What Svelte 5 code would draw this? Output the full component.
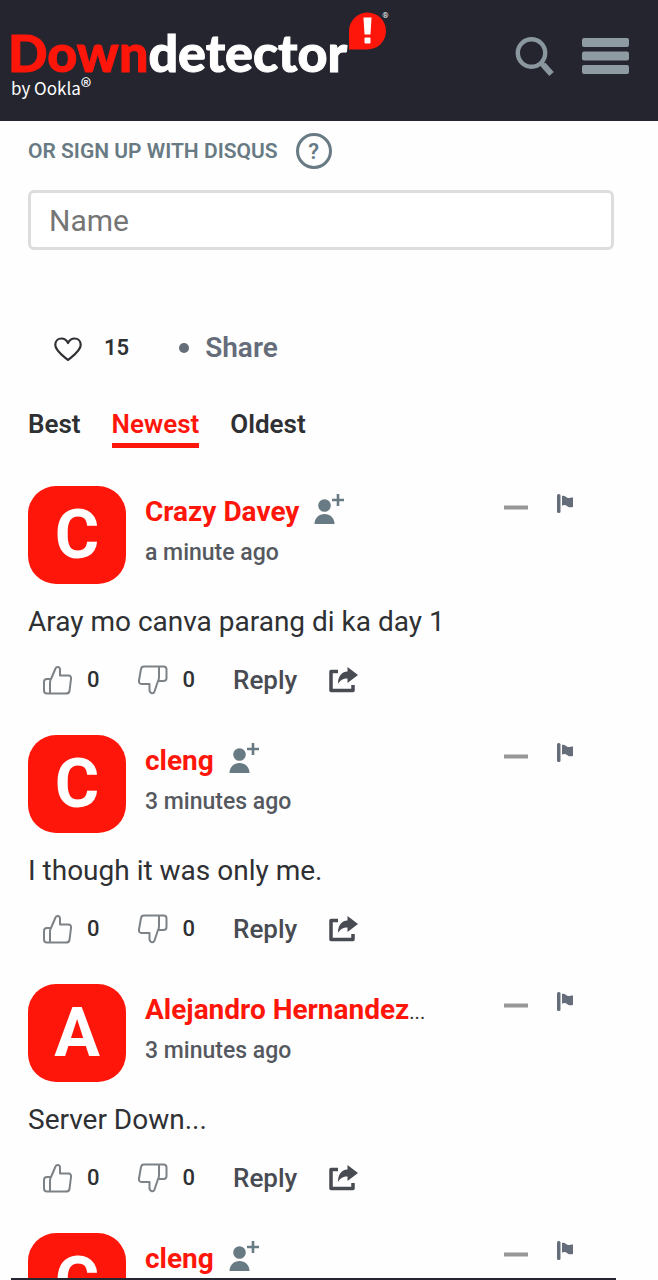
<script lang="ts">
	type Comment = {
		id: number;
		name: string;
		time?: string;
		text?: string;
		truncated?: boolean;
	};

	const sorts = ['Best', 'Newest', 'Oldest'];

	const comments: Comment[] = [
		{ id: 1, name: 'Crazy Davey', time: 'a minute ago', text: 'Aray mo canva parang di ka day 1' },
		{ id: 2, name: 'cleng', time: '3 minutes ago', text: 'I though it was only me.' },
		{ id: 3, name: 'Alejandro Hernandez', time: '3 minutes ago', text: 'Server Down...', truncated: true },
		{ id: 4, name: 'cleng' }
	];

	let activeSort = 'Newest';
	let guestName = '';
</script>

<div class="page">
	<header class="topbar">
		<a class="brand" href="/" aria-label="Downdetector by Ookla">
			<span class="wordmark">
				<span class="name"><span class="red">Down</span>detector</span>
				<svg class="bubble" width="38" height="38" viewBox="0 0 38 38" aria-hidden="true">
					<path d="M0 37.500V18.500A18.500 18.500 0 1 1 18.500 37.500Z" fill="#ff160a" />
					<path d="M14.500 5.500h8l-1 17h-6z" fill="#fff" />
					<rect x="15.500" y="25.500" width="6" height="6" rx="1" fill="#fff" />
				</svg>
				<span class="reg">®</span>
			</span>
			<span class="byline">by Ookla<sup>®</sup></span>
		</a>
		<div class="tools">
			<button type="button" aria-label="Search">
				<svg width="40" height="40" viewBox="0 0 40 40" fill="none" stroke="#8b979f">
					<circle cx="17.500" cy="17" r="13.700" stroke-width="4.400" />
					<path d="M26.500 26.500L30 30" stroke-width="4" />
					<path d="M29 28.500L37.500 38" stroke-width="6" />
				</svg>
			</button>
			<button type="button" aria-label="Menu">
				<svg width="47" height="36" viewBox="0 0 47 36" fill="#8f9ba3">
					<rect width="47" height="9" rx="2" />
					<rect y="13.500" width="47" height="9" rx="2" />
					<rect y="27" width="47" height="9" rx="2" />
				</svg>
			</button>
		</div>
	</header>

	<main class="thread">
		<form class="signup" on:submit|preventDefault>
			<div class="signup-head">
				<label for="guest-name">OR SIGN UP WITH DISQUS</label>
				<button class="help" type="button" aria-label="Help">?</button>
			</div>
			<input id="guest-name" type="text" placeholder="Name" bind:value={guestName} />
		</form>

		<div class="thread-actions">
			<button class="recommend" type="button" aria-label="Recommend">
				<svg width="28" height="25" viewBox="0 0 28 25" fill="none" stroke="#2e3033" stroke-width="2.200" stroke-linejoin="round">
					<path d="M14 24C10 20.500 1.300 15 1.300 9C1.300 5 4 2.500 7.500 2.500C10.500 2.500 12.500 4 14 7C15.500 4 17.500 2.500 20.500 2.500C24 2.500 26.700 5 26.700 9C26.700 15 18 20.500 14 24Z" />
				</svg>
				<span>15</span>
			</button>
			<button class="share" type="button"><span class="dot"></span>Share</button>
		</div>

		<nav class="sorts">
			{#each sorts as sort}
				<button type="button" class:active={sort === activeSort} on:click={() => (activeSort = sort)}>
					{sort}
				</button>
			{/each}
		</nav>

		<ul class="comments">
			{#each comments as comment (comment.id)}
				<li class="comment">
					<div class="comment-head">
						<div class="avatar">{comment.name[0].toUpperCase()}</div>
						<div class="meta">
							<div class="author">
								<a href="#profile">{comment.name}</a>{#if comment.truncated}<span class="more">...</span>{:else}
									<button type="button" aria-label="Follow {comment.name}">
										<svg width="31" height="32" viewBox="0 0 31 32" fill="#687a83">
											<circle cx="10.500" cy="11.500" r="6.300" />
											<path d="M.5 30C.5 24 5 20 10.500 20S20.500 24 20.500 30Z" />
											<path d="M22.700 0h2.600v4.700H30v2.600h-4.700V12h-2.600V7.300H18V4.700h4.700z" />
										</svg>
									</button>
								{/if}
							</div>
							{#if comment.time}
								<time>{comment.time}</time>
							{/if}
						</div>
						<div class="moderate">
							<button type="button" aria-label="Collapse">
								<svg width="24" height="20" viewBox="0 0 24 20"><path d="M0 11.500h24v4H0z" fill="#969799" /></svg>
							</button>
							<button type="button" aria-label="Flag as inappropriate">
								<svg width="16" height="20" viewBox="0 0 16 20" fill="#656c7a">
									<rect width="3.500" height="19" rx="1.500" />
									<path d="M5 2C8 1 9 4 11 4S14 3.500 16 3.500V13C13 13.500 11.500 13.500 10 12S7 11 5 11.500Z" />
								</svg>
							</button>
						</div>
					</div>
					{#if comment.text}
						<p>{comment.text}</p>
						<div class="comment-actions">
							<button class="vote" type="button" aria-label="Like">
								<svg width="30" height="30" viewBox="0 0 30 30" fill="none" stroke="#7d8287" stroke-width="2" stroke-linejoin="round">
									<path d="M9 14L13.500 3.500C14.500 1 18 1.500 18 4.500V10.500H26.500C28.500 10.500 29.200 12 29 14L27.500 26C27.200 28 26 28.500 24 28.500H5C3 28.500 2 27.500 2 25.500V17C2 15 3 14 5 14ZM9 14C8 15 8 17 8 18V28.500" />
								</svg>
								<span>0</span>
							</button>
							<button class="vote" type="button" aria-label="Dislike">
								<svg width="30" height="30" viewBox="0 0 30 30" fill="none" stroke="#7d8287" stroke-width="2" stroke-linejoin="round">
									<path d="M20 16L16.500 26.500C15.500 29.500 12 28.500 11.500 25.500V19H3.500C1.500 19 .8 17.500 1 15.500L3 4C3.300 2 4 1.500 6 1.500H25.500C27.500 1.500 28.500 2.500 28.500 4.500V13C28.500 15 27.500 16 25.500 16ZM20 16C21 15 21 14 21 12V1.500" />
								</svg>
								<span>0</span>
							</button>
							<button class="reply" type="button">Reply</button>
							<button class="forward" type="button" aria-label="Share comment">
								<svg width="29" height="26" viewBox="0 0 29 26">
									<path d="M9 4.500H2V23.500H24V18" fill="none" stroke="#484b52" stroke-width="3.500" stroke-linejoin="round" />
									<path d="M18.500 0L29 8L18.500 16V11.500C14 11.500 11.500 13 9 17C9 9.500 12 5 18.500 4.500Z" fill="#484b52" />
								</svg>
							</button>
						</div>
					{/if}
				</li>
			{/each}
		</ul>
	</main>
</div>

<style>
	:global(body) {
		background: #fefefe;
		font-family: Roboto, 'Liberation Sans', sans-serif;
	}
	.page {
		display: flex;
		flex-direction: column;
		height: 100vh;
		overflow: hidden;
		color: #2e3033;
	}
	button {
		display: flex;
		align-items: center;
		padding: 0;
		border: 0;
		background: none;
		color: inherit;
		font: inherit;
		cursor: pointer;
	}
	a {
		text-decoration: none;
	}
	svg {
		display: block;
		flex: none;
	}
	.topbar {
		display: flex;
		flex: none;
		justify-content: space-between;
		align-items: flex-start;
		padding: 12px 29px 21px 8px;
		background: #24252e;
	}
	.brand {
		color: #fff;
	}
	.wordmark {
		display: flex;
		align-items: flex-start;
	}
	.name {
		padding-top: 16px;
		font-family: Lato, sans-serif;
		font-size: 52px;
		font-weight: 900;
		line-height: 48px;
		-webkit-text-stroke: 1px currentColor;
	}
	.red {
		color: #ff160a;
	}
	.bubble {
		margin-left: 2px;
	}
	.reg {
		margin-left: -5px;
		font-size: 8px;
		line-height: 8px;
	}
	.byline {
		display: block;
		padding-left: 3px;
		font-family: 'Noto Sans CJK JP', 'Noto Sans', sans-serif;
		font-size: 17px;
		line-height: 24px;
	}
	.byline sup {
		font-size: 22px;
		line-height: 0;
		vertical-align: baseline;
	}
	.tools {
		display: flex;
		align-items: center;
		gap: 28px;
		padding-top: 24px;
	}
	.thread {
		display: flex;
		flex: 1;
		flex-direction: column;
		min-height: 0;
		margin: 0 42px 0 11px;
		padding: 12px 0 0 17px;
		overflow: hidden;
		border-bottom: 2px solid #24252e;
	}
	.signup {
		padding-right: 2px;
	}
	.signup-head {
		display: flex;
		align-items: center;
		gap: 18px;
		color: #687a83;
		font-weight: 600;
	}
	.signup-head label {
		font-size: 21px;
		line-height: 36px;
	}
	.help {
		justify-content: center;
		width: 36px;
		height: 36px;
		border: 3px solid #687a83;
		border-radius: 50%;
		font-size: 22px;
	}
	input {
		width: 100%;
		height: 60px;
		box-sizing: border-box;
		margin-top: 21px;
		padding: 0 18px;
		border: 3px solid #dbdddf;
		border-radius: 6px;
		background: #fff;
		color: #2e3033;
		font: 400 30px Roboto, sans-serif;
	}
	input::placeholder {
		color: #757575;
	}
	.thread-actions {
		display: flex;
		align-items: center;
		gap: 50px;
		margin-top: 82px;
		padding-left: 26px;
		line-height: 32px;
	}
	.recommend {
		gap: 22px;
		font-size: 22px;
		font-weight: 600;
	}
	.share {
		gap: 16px;
		color: #656c7a;
		font-size: 28px;
		font-weight: 600;
	}
	.dot {
		width: 10px;
		height: 10px;
		border-radius: 50%;
		background: #656c7a;
	}
	.sorts {
		display: flex;
		gap: 31px;
		margin-top: 44px;
		font-size: 26px;
		font-weight: 600;
		line-height: 32px;
	}
	.sorts button {
		padding-bottom: 3px;
		border-bottom: 5px solid transparent;
	}
	.sorts .active {
		border-color: #ff160a;
		color: #ff160a;
	}
	.comments {
		margin: 38px 0 0;
		padding: 0;
		list-style: none;
	}
	.comment {
		min-height: 249px;
	}
	.comment-head {
		display: flex;
		align-items: flex-start;
	}
	.avatar {
		display: flex;
		flex: none;
		align-items: center;
		justify-content: center;
		width: 98px;
		height: 98px;
		border-radius: 28px;
		background: #ff160a;
		color: #fff;
		font-size: 68px;
		font-weight: 700;
		line-height: 96px;
	}
	.meta {
		flex: 1;
		min-width: 0;
		padding: 8px 0 0 19px;
	}
	.author {
		display: flex;
		align-items: baseline;
		height: 36px;
		font-size: 28px;
		line-height: 36px;
	}
	.author a {
		color: #ff160a;
		font-weight: 700;
	}
	.author button {
		align-self: flex-start;
		margin-left: 15px;
	}
	.more {
		font-size: 20px;
	}
	time {
		display: block;
		color: #55595f;
		font-size: 23px;
		font-weight: 500;
		line-height: 46px;
	}
	.moderate {
		display: flex;
		gap: 29px;
		padding: 8px 43px 0 0;
	}
	p {
		margin: 20px 0 24px;
		font-size: 28px;
		line-height: 36px;
	}
	.comment-actions {
		display: flex;
		align-items: center;
		padding-left: 14px;
		line-height: 32px;
		font-weight: 500;
	}
	.vote {
		gap: 15px;
		margin-right: 38px;
		font-size: 22px;
	}
	.reply {
		margin-right: 32px;
		color: #484b52;
		font-size: 26px;
	}
</style>
